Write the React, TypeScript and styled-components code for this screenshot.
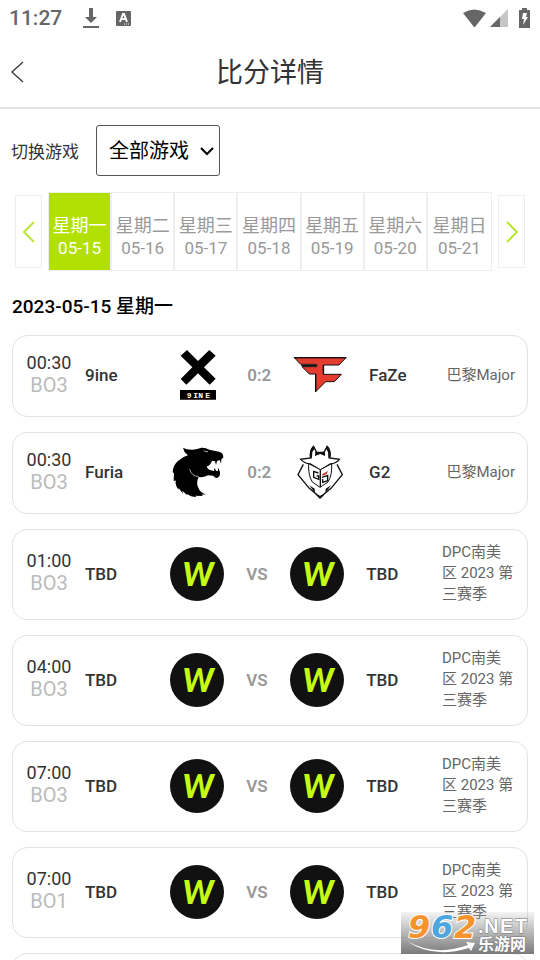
import React from "react";
import styled, { createGlobalStyle } from "styled-components";

const GlobalStyle = createGlobalStyle`
  * { box-sizing: border-box; }
  body {
    margin: 0;
    background: #fff;
    color: #333;
    font-family: Roboto, "Noto Sans CJK SC", sans-serif;
  }
  button, select { font-family: inherit; }
`;

const Page = styled.div`
  position: relative;
  display: flex;
  flex-direction: column;
  height: 100vh;
  overflow: hidden;
  background: #fff;
`;

const StatusBar = styled.div`
  display: flex;
  align-items: center;
  justify-content: space-between;
  height: 36px;
  padding: 0 9px;
  color: #666;
  font-size: 21px;
  font-weight: 500;
`;

const StatusGroup = styled.div<{ $gap: number }>`
  display: flex;
  align-items: center;
  gap: ${(p) => p.$gap}px;
`;

const Header = styled.header`
  display: grid;
  grid-template-columns: 48px 1fr 48px;
  align-items: center;
  height: 73px;
  flex: none;
  border-bottom: 2px solid #e2e2e2;
`;

const BackButton = styled.button`
  display: flex;
  padding: 12px 8px;
  border: 0;
  background: none;
`;

const Title = styled.h1`
  margin: 0;
  padding-top: 2px;
  font-size: 27px;
  font-weight: 400;
  line-height: 36px;
  text-align: center;
`;

const Main = styled.main`
  flex: 1;
  min-height: 0;
  overflow-y: auto;
  scrollbar-width: none;
  padding: 16px 12px 0;
`;

const Filter = styled.div`
  display: flex;
  align-items: center;
  gap: 17px;
  font-size: 17px;
  margin-left: -1px;
`;

const SelectWrap = styled.div`
  display: grid;
  align-items: center;
  > * { grid-area: 1 / 1; }
  svg { justify-self: end; margin-right: 6px; pointer-events: none; }
`;

const GameSelect = styled.select`
  appearance: none;
  width: 124px;
  height: 51px;
  padding: 0 12px;
  border: 1px solid #555;
  border-radius: 3px;
  background: #fff;
  color: #000;
  font-size: 20px;
`;

const Week = styled.nav`
  display: grid;
  grid-template-columns: 27px minmax(0, 1fr) 27px;
  align-items: center;
  gap: 6px;
  margin: 16px 3px 0;
`;

const Arrow = styled.button`
  display: flex;
  align-items: center;
  justify-content: center;
  height: 73px;
  padding: 0;
  border: 1px solid #eee;
  background: #fff;
`;

const Days = styled.div`
  display: grid;
  grid-template-columns: repeat(7, 1fr);
  border: 1px solid #eee;
`;

const Day = styled.button<{ $active?: boolean }>`
  height: 77px;
  padding: 10px 0 0;
  border: 0;
  border-right: 2px solid #eee;
  background: ${(p) => (p.$active ? "#b1e002" : "#fff")};
  color: ${(p) => (p.$active ? "#fff" : "#999")};
  font-size: 17px;
  line-height: 22px;
  white-space: nowrap;
  &:last-child { border-right: 0; }
`;

const DayName = styled.span`
  display: block;
  font-size: 18px;
`;

const DateHeading = styled.h2`
  margin: 24px 0 16px;
  color: #000;
  font-size: 19px;
  font-weight: 500;
  line-height: 24px;
`;

const MatchList = styled.ul`
  display: grid;
  gap: 15px;
  margin: 0;
  padding: 0;
  list-style: none;
`;

const Match = styled.li`
  display: grid;
  grid-template-columns: 46px 100fr 54px 68fr 54px 100fr auto;
  align-items: center;
  min-height: 82px;
  padding: 12px 12px 14px 13px;
  border: 1px solid #e2e2e2;
  border-radius: 15px;
`;

const Schedule = styled.div`
  padding-bottom: 3px;
  font-size: 18px;
  line-height: 22px;
  text-align: center;
`;

const Format = styled.div`
  color: #bbb;
  font-size: 20px;
`;

const Team = styled.div<{ $inset: number }>`
  padding-left: ${(p) => p.$inset}px;
  font-size: 17px;
  font-weight: 500;
`;

const Score = styled.div`
  color: #999;
  font-size: 17px;
  font-weight: 600;
  text-align: center;
`;

const Event = styled.div`
  max-width: 73px;
  color: #666;
  font-size: 15px;
  line-height: 21px;
`;

const Logo = styled.svg`
  display: block;
  width: 54px;
  height: 54px;
`;

const Watermark = styled.div`
  position: absolute;
  right: 6px;
  bottom: 6px;
  width: 133px;
  height: 42px;
  background: linear-gradient(rgba(200, 200, 200, 0.2), rgba(115, 115, 115, 0.95));
  svg { display: block; }
`;

type TeamKey = "nine" | "faze" | "furia" | "g2" | "tbd";

function TeamLogo({ team }: { team: TeamKey }) {
  switch (team) {
    case "nine":
      return (
        <Logo viewBox="21 27 162 162" aria-label="9ine">
          <path d="M69 33 102 66 136 33 155 50 120 85 155 119 137 137 102 103 67 137 50 120 85 85 50 50Z" />
          <path d="M48 153h108v29H48z" />
          <text x="68 88 103 124" y="176" fill="#fff" fontFamily="Liberation Mono" fontWeight="700" fontSize="24">9INE</text>
        </Logo>
      );
    case "faze":
      return (
        <Logo viewBox="387 27 162 162" aria-label="FaZe">
          <path
            d="M391 56H546L525 78H479V106H532L511 128H485L455 158V105H436L414 83H458V76H410Z"
            fill="#e43d30"
            stroke="#111"
            strokeWidth="3"
          />
          <path d="M390 56h157M478 78v28M412 80h46M455 105v54" stroke="#111" strokeWidth="4" fill="none" />
        </Logo>
      );
    case "furia":
      return (
        <Logo viewBox="21 318 162 162" aria-label="Furia">
          <path d="M57 326 68 331Q86 334 100 330L112 326Q124 325 136 332L158 337Q174 339 177 348L178 355Q176 359 172 361L171 374 167 363 159 366 156 378 153 367 144 365Q139 379 129 382 128 389 138 393L150 396 152 386 156 395 161 397 163 386 168 400Q170 412 159 417 151 417 148 410L132 409Q123 416 104 414 96 431 102 444 108 461 125 466L112 467 117 471 94 470 97 474Q79 474 71 465L69 468 55 455 57 464 44 447 43 452Q33 439 35 424L29 427 30 403 26 400Q27 378 42 366 56 353 72 349L62 340Z" />
          <path d="M77 391Q82 411 104 413M119 334Q124 340 132 338" fill="none" stroke="#fff" strokeWidth="2" />
        </Logo>
      );
    case "g2":
      return (
        <Logo viewBox="72 63 162 162" aria-label="G2">
          <g fill="#fff" stroke="#111" strokeWidth="4" strokeLinejoin="miter">
            <path d="M103 121 87 152 121 193 153 220 186 193 220 152 204 121" />
            <path d="M126 102Q120 80 134 68L143 85H165L174 68Q187 82 181 102L211 106Q202 118 184 120L154 138 124 120Q106 118 95 106Z" />
            <path d="M119 119Q117 153 130 174L153 190 177 174Q190 153 188 119L154 137Z" strokeWidth="3" />
          </g>
          <path d="M133 64 137 74 130 84 129 101 122 101Q121 78 133 64M175 64Q188 79 185 101L178 101 177 84 171 74ZM139 82 153 86 168 82 168 96 154 90 138 96ZM121 184 137 194 138 208ZM186 184 170 194 169 208ZM139 211 153 215 168 211 153 225Z" fill="#111" />
          <path d="M154 138V190M148 147 134 142V160L149 166V156H143M159 160 176 154V170L161 175V165" fill="none" stroke="#111" strokeWidth="4" />
          <path d="M159 151 177 141 173 150 161 155Z" fill="#c63329" />
        </Logo>
      );
    default:
      return (
        <Logo viewBox="0 0 54 54" aria-label="W">
          <circle cx="27" cy="27" r="27" fill="#111" />
          <text x="28" y="39" textAnchor="middle" fill="#c5fb14" fontFamily="Lato" fontWeight="900" fontStyle="italic" fontSize="32">W</text>
        </Logo>
      );
  }
}

const days = [
  ["星期一", "05-15"],
  ["星期二", "05-16"],
  ["星期三", "05-17"],
  ["星期四", "05-18"],
  ["星期五", "05-19"],
  ["星期六", "05-20"],
  ["星期日", "05-21"],
];

interface MatchData {
  time: string;
  format: string;
  home: [string, TeamKey];
  away: [string, TeamKey];
  score: string;
  event: string;
}

const pending = (time: string, format: string): MatchData => ({
  time,
  format,
  home: ["TBD", "tbd"],
  away: ["TBD", "tbd"],
  score: "VS",
  event: "DPC南美区 2023 第三赛季",
});

const matches: MatchData[] = [
  { time: "00:30", format: "BO3", home: ["9ine", "nine"], away: ["FaZe", "faze"], score: "0:2", event: "巴黎Major" },
  { time: "00:30", format: "BO3", home: ["Furia", "furia"], away: ["G2", "g2"], score: "0:2", event: "巴黎Major" },
  pending("01:00", "BO3"),
  pending("04:00", "BO3"),
  pending("07:00", "BO3"),
  pending("07:00", "BO1"),
];

export default function App() {
  return (
    <Page>
      <GlobalStyle />
      <StatusBar>
        <StatusGroup $gap={21}>
          <span>11:27</span>
          <StatusGroup $gap={17}>
            <svg width="16" height="21" viewBox="0 0 16 21" fill="#666">
              <path d="M6 0h4v9h4l-6 6-6-6h4zM0 18h16v2H0z" />
            </svg>
            <svg width="15" height="17" viewBox="0 0 15 17">
              <rect y="1" width="15" height="15" rx="1" fill="#666" />
              <path d="M4 12 7 4h1l3 8M5 9h5" fill="none" stroke="#fff" strokeWidth="2" />
              <path d="M8 14h1m1 0h1m1 0h1" stroke="#fff" />
            </svg>
          </StatusGroup>
        </StatusGroup>
        <StatusGroup $gap={4}>
          <svg width="23" height="19" viewBox="0 0 23 19">
            <path d="M0 4Q11-3 23 4L12 18h-1z" fill="#666" />
          </svg>
          <svg width="19" height="19" viewBox="0 0 19 19">
            <path d="M18 0v18H0z" fill="#c6c6c6" />
            <path d="M10 8v10H0z" fill="#666" />
          </svg>
          <svg width="18" height="21" viewBox="-6 0 18 21">
            <path d="M3 0h5v2h3v18H0V2h3z" fill="#666" />
            <path d="M4 5h4L7 9h2l-5 8 1-6H3z" fill="#fff" />
          </svg>
        </StatusGroup>
      </StatusBar>
      <Header>
        <BackButton aria-label="返回">
          <svg width="18" height="22" viewBox="0 0 18 22" fill="none" stroke="#444">
            <path d="M15 1 4 11l11 10" strokeWidth="1.5" />
          </svg>
        </BackButton>
        <Title>比分详情</Title>
      </Header>
      <Main>
        <Filter>
          <label htmlFor="game">切换游戏</label>
          <SelectWrap>
            <GameSelect id="game">
              <option>全部游戏</option>
            </GameSelect>
            <svg width="14" height="10" viewBox="0 0 14 10" fill="none" stroke="#000" strokeWidth="2">
              <path d="m1 2 6 6 6-6" />
            </svg>
          </SelectWrap>
        </Filter>
        <Week>
          <Arrow aria-label="上一周">
            <svg width="14" height="22" viewBox="0 0 14 22" fill="none" stroke="#b9e534" strokeWidth="2">
              <path d="M12 1 2 11l10 10" />
            </svg>
          </Arrow>
          <Days>
            {days.map(([name, date], i) => (
              <Day key={date} $active={i === 0}>
                <DayName>{name}</DayName>
                {date}
              </Day>
            ))}
          </Days>
          <Arrow aria-label="下一周">
            <svg width="14" height="22" viewBox="0 0 14 22" fill="none" stroke="#b9e534" strokeWidth="2">
              <path d="m2 1 10 10L2 21" />
            </svg>
          </Arrow>
        </Week>
        <DateHeading>2023-05-15 星期一</DateHeading>
        <MatchList>
          {matches.map((m, i) => (
            <Match key={i}>
              <Schedule>
                {m.time}
                <Format>{m.format}</Format>
              </Schedule>
              <Team $inset={13}>{m.home[0]}</Team>
              <TeamLogo team={m.home[1]} />
              <Score>{m.score}</Score>
              <TeamLogo team={m.away[1]} />
              <Team $inset={22}>{m.away[0]}</Team>
              <Event>{m.event}</Event>
            </Match>
          ))}
          <Match aria-hidden="true" />
        </MatchList>
      </Main>
      <Watermark>
        <svg width="133" height="42" viewBox="0 0 133 42">
          <g fontWeight="700" stroke="#fff" paintOrder="stroke">
            <g fontFamily="DejaVu Sans" fontStyle="italic" fontSize="32" strokeWidth="2">
              <text x="7" y="26" fill="#f6932c">9</text>
              <text x="30" y="26" fill="#4ea6e0">6</text>
              <text x="53" y="26" fill="#f6932c">2</text>
            </g>
            <text x="77 83 99 114" y="21" fontFamily="Liberation Sans" fontSize="20" fill="#fff" stroke="#777">.NET</text>
            <text x="77" y="38" fontSize="16" fill="#fff" stroke="#777" fontFamily="Noto Sans CJK SC">乐游网</text>
          </g>
          <path d="M6 29Q34 45 67 33l-2-3 9 1-4 8-2-3Q31 47 6 29" fill="#fff" />
        </svg>
      </Watermark>
    </Page>
  );
}
